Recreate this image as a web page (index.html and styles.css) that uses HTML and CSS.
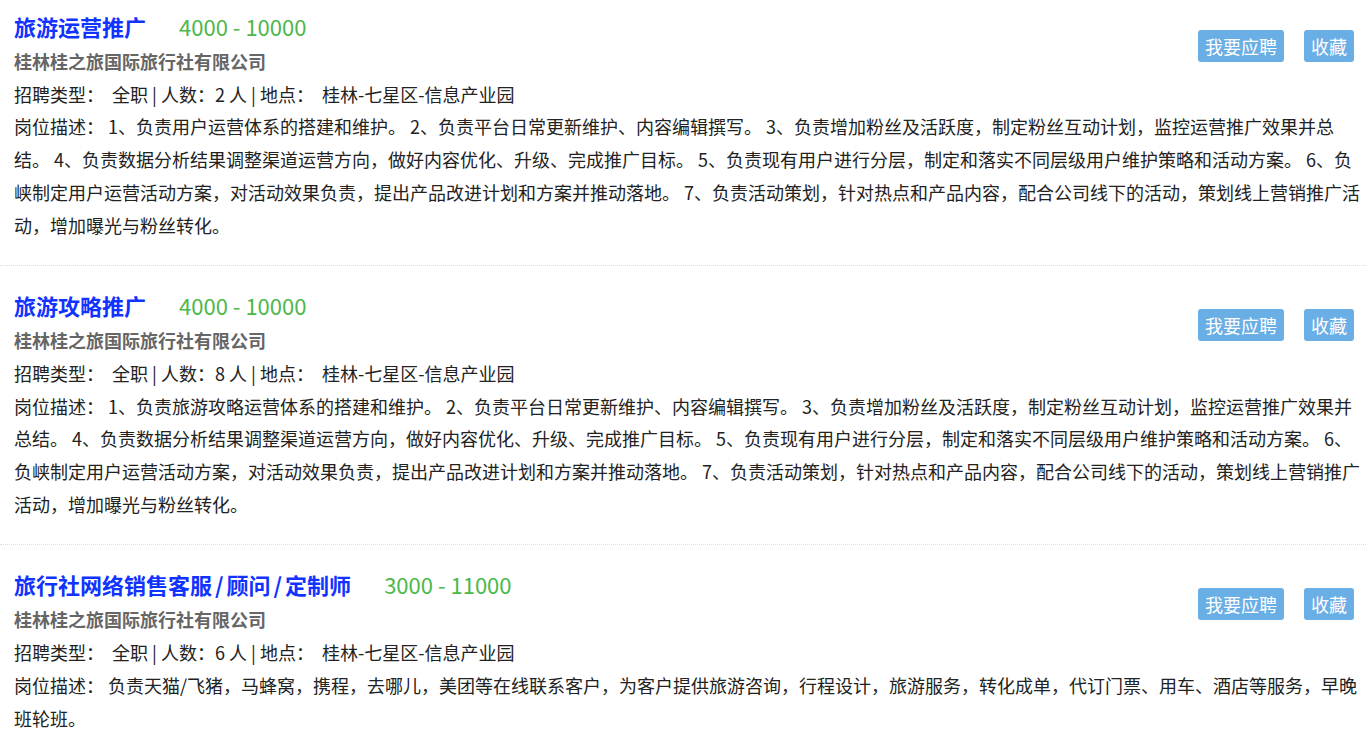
FILE: index.html
```html
<!DOCTYPE html>
<html lang="zh-CN">
<head>
    <meta charset="UTF-8">
    <title>招聘信息</title>
    <link rel="stylesheet" href="styles.css">
</head>
<body>
    <div class="job-list">
        <div class="job">
            <div class="actions">
                <button class="btn">我要应聘</button>
                <button class="btn">收藏</button>
            </div>
            <div class="job-head">
                <span class="job-title">旅游运营推广</span>
                <span class="salary">4000 - 10000</span>
            </div>
            <div class="company">桂林桂之旅国际旅行社有限公司</div>
            <div class="info">招聘类型： &nbsp;全职 | 人数：2 人 | 地点： &nbsp;桂林-七星区-信息产业园</div>
            <div class="desc">岗位描述： 1、负责用户运营体系的搭建和维护。 2、负责平台日常更新维护、内容编辑撰写。 3、负责增加粉丝及活跃度，制定粉丝互动计划，监控运营推广效果并总结。 4、负责数据分析结果调整渠道运营方向，做好内容优化、升级、完成推广目标。 5、负责现有用户进行分层，制定和落实不同层级用户维护策略和活动方案。 6、负峡制定用户运营活动方案，对活动效果负责，提出产品改进计划和方案并推动落地。 7、负责活动策划，针对热点和产品内容，配合公司线下的活动，策划线上营销推广活动，增加曝光与粉丝转化。</div>
        </div>

        <div class="job">
            <div class="actions">
                <button class="btn">我要应聘</button>
                <button class="btn">收藏</button>
            </div>
            <div class="job-head">
                <span class="job-title">旅游攻略推广</span>
                <span class="salary">4000 - 10000</span>
            </div>
            <div class="company">桂林桂之旅国际旅行社有限公司</div>
            <div class="info">招聘类型： &nbsp;全职 | 人数：8 人 | 地点： &nbsp;桂林-七星区-信息产业园</div>
            <div class="desc">岗位描述： 1、负责旅游攻略运营体系的搭建和维护。 2、负责平台日常更新维护、内容编辑撰写。 3、负责增加粉丝及活跃度，制定粉丝互动计划，监控运营推广效果并总结。 4、负责数据分析结果调整渠道运营方向，做好内容优化、升级、完成推广目标。 5、负责现有用户进行分层，制定和落实不同层级用户维护策略和活动方案。 6、负峡制定用户运营活动方案，对活动效果负责，提出产品改进计划和方案并推动落地。 7、负责活动策划，针对热点和产品内容，配合公司线下的活动，策划线上营销推广活动，增加曝光与粉丝转化。</div>
        </div>

        <div class="job">
            <div class="actions">
                <button class="btn">我要应聘</button>
                <button class="btn">收藏</button>
            </div>
            <div class="job-head">
                <span class="job-title">旅行社网络销售客服<span class="slash">/</span>顾问<span class="slash">/</span>定制师</span>
                <span class="salary">3000 - 11000</span>
            </div>
            <div class="company">桂林桂之旅国际旅行社有限公司</div>
            <div class="info">招聘类型： &nbsp;全职 | 人数：6 人 | 地点： &nbsp;桂林-七星区-信息产业园</div>
            <div class="desc">岗位描述： 负责天猫/飞猪，马蜂窝，携程，去哪儿，美团等在线联系客户，为客户提供旅游咨询，行程设计，旅游服务，转化成单，代订门票、用车、酒店等服务，早晚班轮班。</div>
        </div>
    </div>
</body>
</html>
```

FILE: styles.css
```css
body {
    margin: 0;
    padding: 0;
    background: #ffffff;
    color: #222222;
    font-family: "Noto Sans CJK SC", "Noto Sans", sans-serif;
    font-size: 18px;
    overflow: hidden;
}
.job {
    padding: 21px 6px 24px 14px;
    border-bottom: 1px dotted #dddddd;
}
.job:first-child {
    padding-top: 8px;
}
.job-head {
    line-height: 37px;
    height: 37px;
}
.job-title {
    font-size: 22px;
    font-weight: bold;
    color: #1133ff;
}
.job-title .slash {
    padding: 0 3px;
}
.salary {
    font-size: 22px;
    color: #4cb84a;
    margin-left: 29px;
}
.company {
    font-weight: bold;
    color: #666666;
    line-height: 32.7px;
}
.info,
.desc {
    line-height: 32.7px;
}
.actions {
    float: right;
    display: flex;
    gap: 20px;
    margin-top: 22px;
    margin-right: 6px;
}
.btn {
    font-family: "Noto Sans CJK SC", sans-serif;
    font-size: 18px;
    height: 32px;
    line-height: 32px;
    padding: 0 7px;
    border: none;
    border-radius: 3px;
    background-color: #6aaee6;
    color: #ffffff;
    cursor: pointer;
}
```
